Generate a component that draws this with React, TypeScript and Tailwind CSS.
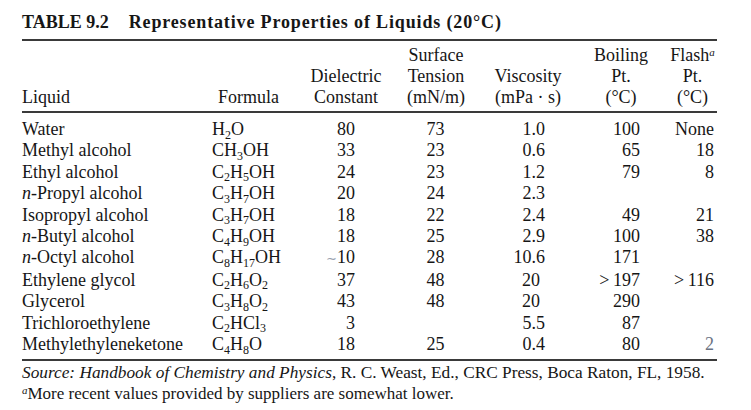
import type { ReactNode } from "react";

// subscript used in the chemical formulas
function S({ children }: { children: ReactNode }) {
  return <sub className="text-[12px] bottom-[-0.3em]">{children}</sub>;
}

type Row = {
  name: ReactNode;
  formula: ReactNode;
  diel: ReactNode;
  surf: string;
  visc: string;
  boil: string;
  flash: ReactNode;
};

const n = <i>n</i>;

const rows: Row[] = [
  { name: "Water", formula: <>H<S>2</S>O</>, diel: "80", surf: "73", visc: "1.0", boil: "100", flash: "None" },
  { name: "Methyl alcohol", formula: <>CH<S>3</S>OH</>, diel: "33", surf: "23", visc: "0.6", boil: "65", flash: "18" },
  { name: "Ethyl alcohol", formula: <>C<S>2</S>H<S>5</S>OH</>, diel: "24", surf: "23", visc: "1.2", boil: "79", flash: "8" },
  { name: <>{n}-Propyl alcohol</>, formula: <>C<S>3</S>H<S>7</S>OH</>, diel: "20", surf: "24", visc: "2.3", boil: "", flash: "" },
  { name: "Isopropyl alcohol", formula: <>C<S>3</S>H<S>7</S>OH</>, diel: "18", surf: "22", visc: "2.4", boil: "49", flash: "21" },
  { name: <>{n}-Butyl alcohol</>, formula: <>C<S>4</S>H<S>9</S>OH</>, diel: "18", surf: "25", visc: "2.9", boil: "100", flash: "38" },
  {
    name: <>{n}-Octyl alcohol</>,
    formula: <>C<S>8</S>H<S>17</S>OH</>,
    diel: (
      <>
        <span className="text-[13px] text-gray-400">∼</span>10
      </>
    ),
    surf: "28",
    visc: "10.6",
    boil: "171",
    flash: "",
  },
  { name: "Ethylene glycol", formula: <>C<S>2</S>H<S>6</S>O<S>2</S></>, diel: "37", surf: "48", visc: "20", boil: ">\u2009197", flash: ">\u2009116" },
  { name: "Glycerol", formula: <>C<S>3</S>H<S>8</S>O<S>2</S></>, diel: "43", surf: "48", visc: "20", boil: "290", flash: "" },
  { name: "Trichloroethylene", formula: <>C<S>2</S>HCl<S>3</S></>, diel: "3", surf: "", visc: "5.5", boil: "87", flash: "" },
  {
    name: "Methylethyleneketone",
    formula: <>C<S>4</S>H<S>8</S>O</>,
    diel: "18",
    surf: "25",
    visc: "0.4",
    boil: "80",
    flash: <span className="text-gray-500">2</span>,
  },
];

const cols = "grid grid-cols-[190px_88px_92px_88px_96px_88px_53px]";

export default function App() {
  return (
    <main className="min-h-[410px] w-[751px] bg-white pl-[22px] pt-[12px] font-['Liberation_Serif',serif] text-[#161616]">
      <h1 className="text-[18px] leading-[20px] font-bold">
        <span>TABLE 9.2</span>
        <span className="ml-[20px] tracking-[0.85px]">Representative Properties of Liquids (20°C)</span>
      </h1>

      <div className="mt-[7px] w-[695px] border-t-2 border-[#3a3a3a]">
        {/* column headings */}
        <div className={`${cols} items-end border-b-2 border-[#3a3a3a] pt-[4px] pb-[3px] text-[18px] leading-[21px]`}>
          <div>Liquid</div>
          <div className="pl-[6px]">Formula</div>
          <div className="text-center">
            Dielectric
            <br />
            Constant
          </div>
          <div className="text-center">
            Surface
            <br />
            Tension
            <br />
            (mN/m)
          </div>
          <div className="text-center">
            Viscosity
            <br />
            (mPa · s)
          </div>
          <div className="pl-[2px] text-center">
            Boiling
            <br />
            Pt.
            <br />
            (°C)
          </div>
          <div className="pl-[4px] text-center">
            Flash<sup className="text-[11px] italic">a</sup>
            <br />
            Pt.
            <br />
            (°C)
          </div>
        </div>

        {/* data rows */}
        <div className="border-b-2 border-[#3a3a3a] pt-[6px] pb-[4px] text-[18px] leading-[21.4px]">
          {rows.map((r, i) => (
            <div key={i} className={cols}>
              <div>{r.name}</div>
              <div>{r.formula}</div>
              <div className="pr-[37px] text-right">{r.diel}</div>
              <div className="pr-[1px] text-center">{r.surf}</div>
              <div className={`text-right ${r.visc === "20" ? "pr-[36px]" : "pr-[31px]"}`}>{r.visc}</div>
              <div className="pr-[24px] text-right">{r.boil}</div>
              <div className="pr-[3px] text-right">{r.flash}</div>
            </div>
          ))}
        </div>
      </div>

      <p className="mt-[1px] text-[17.3px] leading-[21px]">
        <i>Source: Handbook of Chemistry and Physics</i>, R. C. Weast, Ed., CRC Press, Boca Raton, FL, 1958.
      </p>
      <p className="text-[17px] leading-[21px]">
        <sup className="text-[11px] italic">a</sup>More recent values provided by suppliers are somewhat lower.
      </p>
    </main>
  );
}
